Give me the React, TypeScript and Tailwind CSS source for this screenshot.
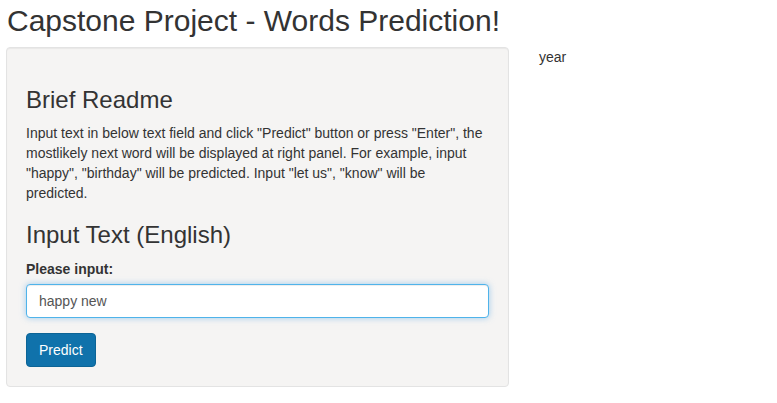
export default function App() {
  return (
    <div className="min-h-[403px] bg-white font-['Liberation_Sans',Arial,sans-serif] text-[14px] leading-[20px] text-[#333]">
      <h2 className="pl-[7px] pt-[4px] mb-[10px] text-[30px] leading-[33px] font-normal text-[#333]">
        Capstone Project - Words Prediction!
      </h2>

      <div className="flex items-start">
        {/* Sidebar well */}
        <div className="ml-[6px] w-[503px] rounded-[4px] border border-[#e3e3e3] bg-[#f5f4f3] p-[19px] shadow-[inset_0_1px_1px_rgba(0,0,0,0.05)]">
          <h3 className="mt-[20px] mb-[10px] text-[24px] leading-[26.4px] font-normal">Brief Readme</h3>
          <p>
            Input text in below text field and click "Predict" button or press "Enter", the mostlikely next word
            will be displayed at right panel. For example, input "happy", "birthday" will be predicted. Input "let
            us", "know" will be predicted.
          </p>

          <h3 className="mt-[19px] mb-[10px] text-[24px] leading-[26.4px] font-normal">Input Text (English)</h3>
          <div className="mb-[15px]">
            <label className="mb-[5px] block font-bold">Please input:</label>
            <input
              type="text"
              defaultValue="happy new"
              className="block h-[34px] w-full rounded-[4px] border border-[#4fb3ea] bg-white px-[12px] py-[6px] text-[14px] leading-[20px] text-[#555] outline-none shadow-[inset_0_1px_1px_rgba(0,0,0,0.075),0_0_6px_rgba(102,175,233,0.6)]"
            />
          </div>
          <button className="h-[34px] rounded-[4px] border border-[#0c6496] bg-[#1072ab] px-[12px] py-[6px] text-[14px] leading-[20px] text-white">
            Predict
          </button>
        </div>

        {/* Main panel */}
        <div className="ml-[30px]">year</div>
      </div>
    </div>
  );
}
